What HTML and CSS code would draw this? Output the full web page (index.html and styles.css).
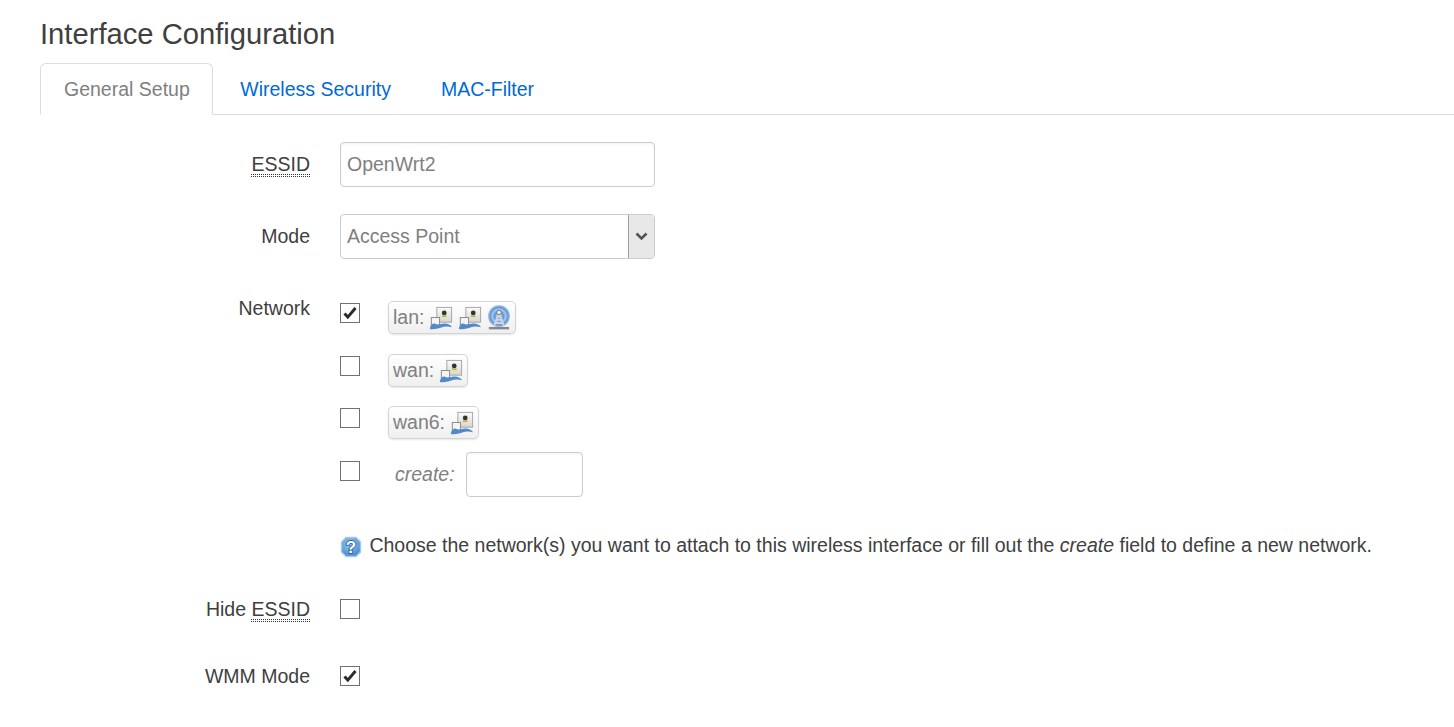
FILE: index.html
```html
<!DOCTYPE html>
<html lang="en">
<head>
  <meta charset="UTF-8" />
  <title>Interface Configuration</title>
  <link rel="stylesheet" href="styles.css">
</head>
<body>
  <svg class="defs" width="0" height="0">
    <defs>
      <linearGradient id="screen" x1="0" y1="0" x2="0" y2="1">
        <stop offset="0" stop-color="#fbfbfb"/>
        <stop offset="1" stop-color="#d6d6d2"/>
      </linearGradient>
      <radialGradient id="air" cx="0.5" cy="0.5" r="0.5">
        <stop offset="0" stop-color="#cfe0f3"/>
        <stop offset="0.4" stop-color="#5f95d6"/>
        <stop offset="0.6" stop-color="#a9c8ea"/>
        <stop offset="0.8" stop-color="#5f95d6"/>
        <stop offset="1" stop-color="#b9d2ee"/>
      </radialGradient>
      <radialGradient id="help" cx="0.45" cy="0.35" r="0.7">
        <stop offset="0" stop-color="#9fcdf2"/>
        <stop offset="1" stop-color="#3f86c8"/>
      </radialGradient>
      <symbol id="eth" viewBox="0 0 26 26">
        <rect x="8.500" y="1.500" width="16" height="16" fill="url(#screen)" stroke="#a2a29e"/>
        <circle cx="16.500" cy="7.500" r="2.600" fill="#34342c"/>
        <rect x="14" y="10" width="5" height="2" fill="#c9b23c"/>
        <rect x="2.500" y="12.500" width="9" height="8" fill="#f4f4f2" stroke="#85858a"/>
        <path d="M1 25c0-3 2-6 5-6l3 1.500c3-1 6-2 9-1.500s6 2 7 4c-4-1-8-1-11 0s-8 3-13 2z" fill="#5289ca"/>
      </symbol>
      <symbol id="wifi" viewBox="0 0 26 26">
        <circle cx="13" cy="11" r="12" fill="url(#air)"/>
        <path d="M13 6l-5 15M13 6l5 15M10 15h6M8.500 18.500h9" fill="none" stroke="#d3d7dc" stroke-width="1.800"/>
        <path d="M2 24h22" stroke="#85878c" stroke-width="2.600"/>
        <circle cx="13" cy="7" r="2.400" fill="#eef2f7" stroke="#66758a"/>
      </symbol>
    </defs>
  </svg>

  <h2 class="title">Interface Configuration</h2>

  <ul class="tabs">
    <li class="tab active"><a href="#">General Setup</a></li>
    <li class="tab"><a href="#">Wireless Security</a></li>
    <li class="tab"><a href="#">MAC-Filter</a></li>
  </ul>

  <div class="form">
    <div class="row row-essid">
      <label class="label"><abbr>ESSID</abbr></label>
      <div class="field"><input class="text" type="text" value="OpenWrt2"></div>
    </div>

    <div class="row row-mode">
      <label class="label">Mode</label>
      <div class="field">
        <div class="select">
          <span class="select-value">Access Point</span>
          <span class="select-btn">
            <svg width="13" height="9" viewBox="0 0 13 9"><path d="M1.500 1.500L6.500 6.500l5-5" fill="none" stroke="#555" stroke-width="2.600"/></svg>
          </span>
        </div>
      </div>
    </div>

    <div class="row row-network">
      <label class="label">Network</label>
      <div class="field">
        <ul class="networks">
          <li class="net">
            <span class="check on"><svg width="16" height="14" viewBox="0 0 16 14"><path d="M2.500 7.500l3.300 3.600L13.500 2" fill="none" stroke="#2b2b2b" stroke-width="3"/></svg></span>
            <span class="badge">lan:
              <svg class="ifc"><use href="#eth"/></svg><svg class="ifc"><use href="#eth"/></svg><svg class="ifc"><use href="#wifi"/></svg>
            </span>
          </li>
          <li class="net net-short">
            <span class="check"></span>
            <span class="badge">wan:
              <svg class="ifc"><use href="#eth"/></svg>
            </span>
          </li>
          <li class="net">
            <span class="check"></span>
            <span class="badge">wan6:
              <svg class="ifc"><use href="#eth"/></svg>
            </span>
          </li>
          <li class="net net-create">
            <span class="check"></span>
            <em class="create">create:</em>
            <input class="text text-small" type="text">
          </li>
        </ul>
        <p class="help">
          <svg class="help-icon" width="22" height="22" viewBox="0 0 22 22">
            <path d="M6 1.500h10l4.500 4.500v10l-4.500 4.500h-10l-4.500-4.500v-10z" fill="url(#help)" stroke="#a9c9e6" stroke-width="1.500" stroke-linejoin="round"/>
            <text x="11" y="17" text-anchor="middle" class="help-mark">?</text>
          </svg>
          Choose the network(s) you want to attach to this wireless interface or fill out the <em>create</em> field to define a new network.
        </p>
      </div>
    </div>

    <div class="row row-hide">
      <label class="label">Hide <abbr>ESSID</abbr></label>
      <div class="field"><span class="check"></span></div>
    </div>

    <div class="row row-wmm">
      <label class="label">WMM Mode</label>
      <div class="field">
        <span class="check on"><svg width="16" height="14" viewBox="0 0 16 14"><path d="M2.500 7.500l3.300 3.600L13.500 2" fill="none" stroke="#2b2b2b" stroke-width="3"/></svg></span>
      </div>
    </div>
  </div>
</body>
</html>
```

FILE: styles.css
```css
html, body {
  height: 100%;
  overflow: hidden;
}
body {
  font-family: "Liberation Sans", Arial, sans-serif;
  font-size: 19.5px;
  color: #404040;
  background-color: #fff;
  margin: 0;
  padding: 0 0 0 40px;
}
.defs {
  position: absolute;
}
.title {
  font-size: 29.2px;
  font-weight: normal;
  line-height: 34px;
  margin: 0;
  padding-top: 17px;
  height: 46px;
}
.tabs {
  display: flex;
  list-style: none;
  margin: 0;
  padding: 0;
  height: 51px;
  border-bottom: 1px solid #ddd;
}
.tab a {
  display: block;
  padding: 0 23px 0 27px;
  height: 51px;
  line-height: 52px;
  color: #0069d6;
  text-decoration: none;
}
.tab.active a {
  padding: 0 22.500px 0 23px;
  height: 50px;
  line-height: 50px;
  color: #808080;
  background-color: #fff;
  border: 1px solid #ddd;
  border-bottom: 1px solid #fff;
  border-radius: 6px 6px 0 0;
}
.form {
  padding-top: 27px;
}
.row {
  display: grid;
  grid-template-columns: 270px 1fr;
  column-gap: 30px;
}
.row-essid { height: 72px; }
.row-mode { height: 84px; }
.row-network { height: 301px; }
.row-hide { height: 67px; }
.label {
  text-align: right;
  line-height: 44px;
  white-space: nowrap;
}
.row-network .label,
.row-hide .label,
.row-wmm .label {
  line-height: 20px;
}
abbr {
  padding-bottom: 2px;
  background-image:
    repeating-linear-gradient(90deg, #333 0 1px, transparent 1px 2px),
    repeating-linear-gradient(90deg, #333 0 1px, transparent 1px 2px);
  background-size: 100% 1px;
  background-repeat: no-repeat;
  background-position: left bottom 0, left bottom 2px;
}
.field {
  min-width: 0;
}
.text {
  font: inherit;
  color: #808080;
  width: 315px;
  height: 45px;
  padding: 0 6px;
  box-sizing: border-box;
  border: 1px solid #ccc;
  border-radius: 4px;
  box-shadow: inset 0 1px 3px rgba(0, 0, 0, 0.05);
  outline: none;
}
.text-small {
  width: 117px;
}
.select {
  display: flex;
  width: 315px;
  height: 45px;
  box-sizing: border-box;
  border: 1px solid #ccc;
  border-radius: 4px;
  overflow: hidden;
}
.select-value {
  flex: 1;
  color: #808080;
  line-height: 43px;
  padding-left: 6px;
}
.select-btn {
  display: flex;
  align-items: center;
  justify-content: center;
  width: 25px;
  background-color: #e8e8e8;
  border-left: 1px solid #a0a0a0;
}
.networks {
  list-style: none;
  margin: 0;
  padding: 0;
}
.net {
  display: flex;
  align-items: flex-start;
  height: 53px;
}
.net-short {
  height: 52px;
}
.net > .check {
  margin-top: 5px;
}
.check {
  display: flex;
  align-items: center;
  justify-content: center;
  width: 20px;
  height: 20px;
  box-sizing: border-box;
  border: 1px solid #707070;
  background-color: #fff;
  flex: none;
}
.badge {
  display: inline-flex;
  align-items: center;
  gap: 5px;
  height: 33px;
  margin: 3px 0 0 28px;
  padding: 0 4px;
  box-sizing: border-box;
  color: #808080;
  border: 1px solid #d4d4d4;
  border-radius: 5px;
  background: linear-gradient(#fff, #efefef);
  box-shadow: 0 1px 2px rgba(0, 0, 0, 0.1);
}
.ifc {
  width: 24px;
  height: 26px;
  filter: blur(0.4px);
}
.create {
  color: #808080;
  margin: 6px 11px 0 35px;
  line-height: 24px;
}
.net-create .text {
  margin-top: -4px;
}
.help {
  margin: 24px 0 0;
  line-height: 24px;
  white-space: nowrap;
}
.help-icon {
  vertical-align: -6px;
  margin-right: 2px;
}
.help-mark {
  font-size: 17px;
  font-weight: bold;
  fill: #fff;
  stroke: #2a6aa6;
  stroke-width: 2px;
  paint-order: stroke;
}
```
